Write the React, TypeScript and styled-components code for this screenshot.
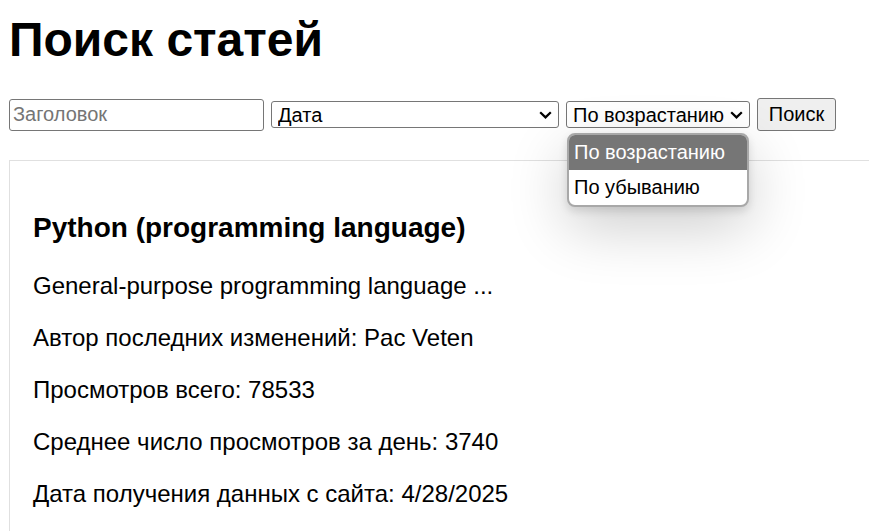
import React from 'react';
import styled, { createGlobalStyle } from 'styled-components';

const GlobalStyle = createGlobalStyle`
  html, body {
    margin: 0;
    padding: 0;
    overflow: hidden;
    background: #ffffff;
    color: #000000;
    font-family: 'Liberation Sans', Arial, sans-serif;
  }
`;

const Page = styled.div`
  padding: 12px 0 0 9px;
  width: 1300px;
`;

const Title = styled.h1`
  font-size: 48px;
  font-weight: 700;
  line-height: normal;
  margin: 0 0 31px;
`;

const SearchRow = styled.form`
  display: flex;
  align-items: center;
  gap: 7px;
  height: 33px;
  margin: 0 0 29px;
`;

const TextInput = styled.input`
  box-sizing: border-box;
  width: 255px;
  height: 32px;
  padding: 1px 3px;
  font: 20px 'Liberation Sans', Arial, sans-serif;
  color: #000;
  border: 1px solid #767676;
  border-radius: 3px;
  outline: none;

  &::placeholder {
    color: #757575;
  }
`;

const SelectWrap = styled.div`
  position: relative;
  display: inline-flex;
  align-items: center;
`;

const Select = styled.select<{ $width: number }>`
  appearance: none;
  box-sizing: border-box;
  width: ${(p) => p.$width}px;
  height: 27px;
  padding: 0 24px 0 6px;
  font: 20px 'Liberation Sans', Arial, sans-serif;
  color: #000;
  background: #fff;
  border: 1px solid #767676;
  border-radius: 3px;
  outline: none;
`;

const Chevron = styled.svg`
  position: absolute;
  right: 7px;
  top: 50%;
  margin-top: -4px;
  width: 13px;
  height: 8px;
  pointer-events: none;
`;

const SearchButton = styled.button`
  box-sizing: border-box;
  width: 79px;
  height: 33px;
  padding: 0 10px;
  font: 20px 'Liberation Sans', Arial, sans-serif;
  color: #000;
  background: #efefef;
  border: 1px solid #767676;
  border-radius: 3px;
`;

const Dropdown = styled.ul`
  position: absolute;
  top: calc(100% + 5px);
  left: 1px;
  width: 182px;
  box-sizing: border-box;
  margin: 0;
  padding: 0;
  list-style: none;
  background: #fff;
  border: 2px solid #a8a8a8;
  border-radius: 8px;
  overflow: hidden;
  box-shadow: 0 4px 8px rgba(0, 0, 0, 0.12), 0 20px 60px rgba(0, 0, 0, 0.2);
  z-index: 10;
`;

const Option = styled.li<{ $active?: boolean }>`
  height: 35px;
  line-height: 35px;
  padding: 0 5px;
  font-size: 20px;
  color: ${(p) => (p.$active ? '#fff' : '#000')};
  background: ${(p) => (p.$active ? '#767676' : 'transparent')};
`;

const ArticleCard = styled.section`
  border: 1px solid #e0e0e0;
  border-right: none;
  padding: 23px;
`;

const ArticleTitle = styled.h3`
  font-size: 28px;
  font-weight: 700;
  line-height: normal;
  margin: 28px 0;
`;

const Field = styled.p`
  font-size: 24px;
  line-height: normal;
  margin: 24px 0;
`;

const ChevronIcon = () => (
  <Chevron viewBox="0 0 13 8">
    <path d="M1.2 1.2 L6.5 6.4 L11.8 1.2" fill="none" stroke="#000" strokeWidth="2.2" />
  </Chevron>
);

const App: React.FC = () => {
  return (
    <Page>
      <GlobalStyle />
      <Title>Поиск статей</Title>
      <SearchRow onSubmit={(e) => e.preventDefault()}>
        <TextInput placeholder="Заголовок" />
        <SelectWrap>
          <Select $width={288} defaultValue="date">
            <option value="date">Дата</option>
          </Select>
          <ChevronIcon />
        </SelectWrap>
        <SelectWrap>
          <Select $width={184} defaultValue="asc">
            <option value="asc">По возрастанию</option>
            <option value="desc">По убыванию</option>
          </Select>
          <ChevronIcon />
          <Dropdown>
            <Option $active>По возрастанию</Option>
            <Option>По убыванию</Option>
          </Dropdown>
        </SelectWrap>
        <SearchButton type="submit">Поиск</SearchButton>
      </SearchRow>
      <ArticleCard>
        <ArticleTitle>Python (programming language)</ArticleTitle>
        <Field>General-purpose programming language ...</Field>
        <Field>Автор последних изменений: Pac Veten</Field>
        <Field>Просмотров всего: 78533</Field>
        <Field>Среднее число просмотров за день: 3740</Field>
        <Field>Дата получения данных с сайта: 4/28/2025</Field>
      </ArticleCard>
    </Page>
  );
};

export default App;
